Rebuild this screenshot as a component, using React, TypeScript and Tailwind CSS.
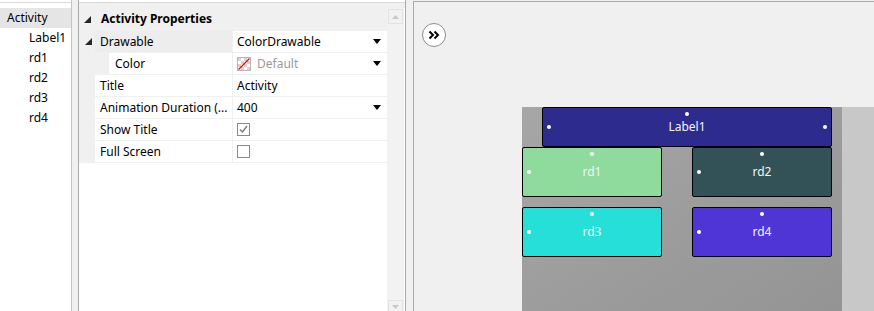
import React from 'react'

const font = "font-['Segoe_UI','Noto_Sans',sans-serif]"

function Expander() {
  return (
    <svg width="7" height="7" viewBox="0 0 7 7" className="shrink-0">
      <path d="M7 0 L7 7 L0 7 Z" fill="#262626" />
    </svg>
  )
}

function DropArrow() {
  return (
    <svg width="8" height="5" viewBox="0 0 8 5" className="shrink-0">
      <path d="M0 0 L8 0 L4 5 Z" fill="#000" />
    </svg>
  )
}

function Check({ checked }: { checked?: boolean }) {
  return (
    <div className="w-[13px] h-[13px] border border-[#8a8a8a] bg-white flex items-center justify-center">
      {checked && (
        <svg width="11" height="11" viewBox="0 0 11 11">
          <path d="M2 5.5 L4.5 8 L9 2" stroke="#7a7a7a" strokeWidth="1.4" fill="none" />
        </svg>
      )}
    </div>
  )
}

function NoColor() {
  return (
    <svg width="14" height="14" viewBox="0 0 14 14" className="shrink-0">
      <rect x="0.5" y="0.5" width="13" height="13" fill="#fff" stroke="#b5b5b5" />
      <rect x="1" y="1" width="3" height="3" fill="#d4d4d4" />
      <rect x="7" y="1" width="3" height="3" fill="#d4d4d4" />
      <rect x="4" y="4" width="3" height="3" fill="#d4d4d4" />
      <rect x="10" y="4" width="3" height="3" fill="#d4d4d4" />
      <rect x="1" y="7" width="3" height="3" fill="#d4d4d4" />
      <rect x="7" y="7" width="3" height="3" fill="#d4d4d4" />
      <rect x="4" y="10" width="3" height="3" fill="#d4d4d4" />
      <rect x="10" y="10" width="3" height="3" fill="#d4d4d4" />
      <path d="M1.5 12.5 L12.5 1.5" stroke="#f00000" strokeWidth="1.2" />
    </svg>
  )
}

type Row = {
  label: string
  value?: React.ReactNode
  drop?: boolean
  expander?: boolean
  indent?: boolean
  shaded?: boolean
}

const rows: Row[] = [
  { label: 'Drawable', value: 'ColorDrawable', drop: true, expander: true, shaded: true },
  {
    label: 'Color',
    indent: true,
    drop: true,
    value: (
      <span className="flex items-center gap-[6px] text-[#9a9a9a]">
        <NoColor />
        Default
      </span>
    ),
  },
  { label: 'Title', value: 'Activity' },
  { label: 'Animation Duration (...', value: '400', drop: true },
  { label: 'Show Title', value: <Check checked /> },
  { label: 'Full Screen', value: <Check /> },
]

function Dot({ className }: { className: string }) {
  return <span className={`absolute w-[4px] h-[4px] rounded-full bg-white ${className}`} />
}

function Widget({
  label,
  className,
  wide,
}: {
  label: string
  className: string
  wide?: boolean
}) {
  return (
    <div
      className={`absolute border border-black rounded-[2px] flex items-center justify-center text-[12px] text-[#f4f4f4] ${className}`}
    >
      <Dot className="top-[4px] left-1/2 -translate-x-1/2" />
      <Dot className="left-[4px] top-1/2 -translate-y-1/2" />
      {wide && <Dot className="right-[4px] top-1/2 -translate-y-1/2" />}
      {label}
    </div>
  )
}

export default function App() {
  return (
    <div className={`w-[874px] h-[311px] overflow-hidden flex bg-[#f0f0f0] text-[12px] text-black ${font}`}>
      {/* activity tree */}
      <div className="w-[71px] flex flex-col bg-white">
        <div className="h-[3px] border-b border-[#d9d9d9] bg-white" />
        <div className="h-[5px] bg-white" />
        <div className="h-[20px] bg-[#e5e5e5] flex items-center pl-[7px]">Activity</div>
        {['Label1', 'rd1', 'rd2', 'rd3', 'rd4'].map((n) => (
          <div key={n} className="h-[20px] flex items-center pl-[29px]">
            {n}
          </div>
        ))}
      </div>
      <div className="w-[1px] bg-[#c4c4c4]" />
      <div className="w-[6px] bg-[#f0f0f0]" />
      <div className="w-[1px] bg-[#a9a9a9]" />

      {/* property grid */}
      <div className="w-[326px] flex flex-col bg-white">
        <div className="h-[3px] border-b border-[#d9d9d9] bg-white" />
        <div className="h-[5px] bg-[#f0f0f0]" />
        <div className="flex-1 flex">
          <div className="w-[308px] flex flex-col">
            <div className="h-[23px] bg-[#f0f0f0] flex items-center pl-[5px] pb-[1px] gap-[10px] font-bold">
              <Expander />
              Activity Properties
            </div>
            {rows.map((r) => (
              <div key={r.label} className="h-[22px] flex border-b border-[#f0f0f0]">
                <div
                  className={`${r.indent ? 'w-[30px]' : 'w-[16px]'} bg-[#f0f0f0] flex items-center pl-[6px]`}
                >
                  {r.expander && <Expander />}
                </div>
                <div
                  className={`${r.indent ? 'w-[124px] pl-[6px]' : 'w-[138px] pl-[5px]'} ${
                    r.shaded ? 'bg-[#ededed]' : 'bg-white'
                  } flex items-center whitespace-nowrap overflow-hidden border-r border-[#f0f0f0]`}
                >
                  {r.label}
                </div>
                <div className="flex-1 flex items-center justify-between pl-[4px] pr-[6px]">
                  <span className="flex items-center">{r.value}</span>
                  {r.drop && <DropArrow />}
                </div>
              </div>
            ))}
          </div>
          {/* scrollbar */}
          <div className="w-[17px] bg-[#f2f2f2] flex flex-col justify-between items-center pt-[1px]">
            <div className="w-[15px] h-[15px] border border-[#e2e2e2] flex items-center justify-center">
              <svg width="7" height="4" viewBox="0 0 7 4">
                <path d="M0 4 L7 4 L3.5 0 Z" fill="#c8c8c8" />
              </svg>
            </div>
            <div className="w-[15px] h-[11px] border border-[#e2e2e2] border-b-0 flex items-start justify-center pt-[4px]">
              <svg width="7" height="4" viewBox="0 0 7 4">
                <path d="M0 0 L7 0 L3.5 4 Z" fill="#c8c8c8" />
              </svg>
            </div>
          </div>
        </div>
      </div>
      <div className="w-[1px] bg-[#a9a9a9]" />
      <div className="w-[7px] bg-[#f0f0f0]" />
      <div className="w-[1px] bg-[#a9a9a9] mt-[1px]" />

      {/* designer */}
      <div className="flex-1 flex flex-col mt-[1px] border-t border-[#a9a9a9] bg-[#f0f0f0]">
        <div className="h-[105px] pl-[8px] pt-[21px]">
          <div className="w-[24px] h-[24px] rounded-full border border-[#8c8c8c] bg-white flex items-center justify-center">
            <svg width="12" height="10" viewBox="0 0 12 10">
              <path d="M1.5 1.5 L5 5 L1.5 8.5 M6.5 1.5 L10 5 L6.5 8.5" stroke="#000" strokeWidth="2" fill="none" />
            </svg>
          </div>
        </div>
        <div className="flex-1 flex pl-[108px]">
          <div className="relative w-[320px] bg-gradient-to-br from-[#a6a6a6] to-[#949494]">
            <Widget label="Label1" wide className="left-[20px] top-0 w-[290px] h-[40px] bg-[#2e2b8f]" />
            <Widget label="rd1" className="left-0 top-[40px] w-[140px] h-[50px] bg-[#8edb9d]" />
            <Widget label="rd2" className="left-[170px] top-[40px] w-[140px] h-[50px] bg-[#335257]" />
            <Widget label="rd3" className="left-0 top-[100px] w-[140px] h-[50px] bg-[#27dfd9]" />
            <Widget label="rd4" className="left-[170px] top-[100px] w-[140px] h-[50px] bg-[#4f35d6]" />
          </div>
          <div className="flex-1 bg-[#c8c8c8]" />
        </div>
      </div>
    </div>
  )
}
